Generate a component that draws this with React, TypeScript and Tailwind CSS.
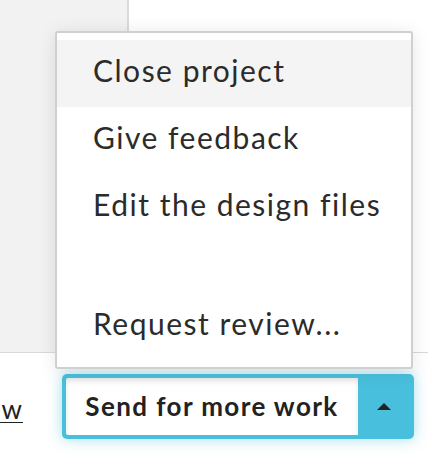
import React from "react";

interface MenuItem {
  label: string;
  active?: boolean;
  spacer?: boolean;
}

const items: MenuItem[] = [
  { label: "Close project", active: true },
  { label: "Give feedback" },
  { label: "Edit the design files" },
  { label: "", spacer: true },
  { label: "Request review..." },
];

const App: React.FC = () => {
  return (
    <div className="relative h-[460px] w-[428px] overflow-hidden bg-white font-['Lato',sans-serif] text-[#2b2b2b]">
      <div className="flex h-[353px] border-b border-[#d9d9d9]">
        <div className="w-[129px] border-r-2 border-[#dadada] bg-[#f2f2f2]" />
        <div className="flex-1 bg-white" />
      </div>

      <div className="flex h-[107px] items-center justify-end gap-[39px] overflow-hidden pr-[14px]">
        <a className="whitespace-nowrap pt-[6px] text-[26px] tracking-[1px] text-[#222] underline decoration-1 underline-offset-[3px]">
          Preview
        </a>
        <div className="flex h-[65px] w-[352px] shrink-0 rounded-[5px] bg-[#48bfdc] p-[4px] shadow-[0_0_14px_rgba(72,191,220,0.5)]">
          <button
            type="button"
            className="flex flex-1 items-center justify-center whitespace-nowrap rounded-l-[2px] bg-white text-[26px] font-bold tracking-[1.4px] text-[#222] shadow-[inset_0_3px_5px_rgba(0,0,0,0.1)]"
          >
            Send for more work
          </button>
          <div className="flex w-[52px] items-center justify-center">
            <svg width="14" height="7" viewBox="0 0 14 7">
              <path d="M0 7 L7 0 L14 7 Z" fill="#222" />
            </svg>
          </div>
        </div>
      </div>

      <div className="absolute left-[55px] top-[31px] w-[358px] rounded-[3px] border-2 border-[#d0d0d0] bg-white py-[7px] shadow-[0_2px_18px_rgba(0,0,0,0.1)]">
        {items.map((item, index) =>
          item.spacer ? (
            <div key={index} className="h-[52px]" />
          ) : (
            <div
              key={index}
              className={`flex h-[67px] items-center whitespace-nowrap pb-[6px] pl-[36px] pr-[16px] text-[30px] tracking-[1.5px] ${
                item.active ? "bg-[#f4f4f4]" : "bg-white"
              }`}
            >
              {item.label}
            </div>
          )
        )}
      </div>
    </div>
  );
};

export default App;
